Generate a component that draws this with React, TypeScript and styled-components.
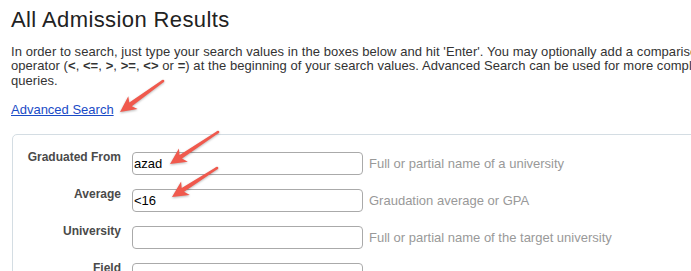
import React from "react";
import styled, { createGlobalStyle } from "styled-components";

const GlobalStyle = createGlobalStyle`
  html, body { margin: 0; padding: 0; background: #fff; overflow: hidden; }
  body { font-family: "Liberation Sans", Arial, Helvetica, sans-serif; }
`;

const Page = styled.div`
  position: relative;
  width: 691px;
  height: 271px;
  overflow: hidden;
  padding-left: 11px;
  box-sizing: border-box;
`;

const Title = styled.h1`
  margin: 7px 0 0;
  font-size: 22px;
  line-height: 26px;
  font-weight: normal;
  letter-spacing: 0.4px;
  color: #222;
  white-space: nowrap;
`;

const Intro = styled.p`
  margin: 12px 0 0;
  font-size: 13px;
  line-height: 1.1;
  letter-spacing: 0.06px;
  color: #333;
  white-space: nowrap;
  b { font-weight: bold; }
`;

const LinkLine = styled.p`
  margin: 15px 0 0;
  font-size: 13px;
  line-height: 1.1;
`;

const Link = styled.a`
  color: #1a4bc6;
  text-decoration: underline;
`;

const Panel = styled.div`
  margin: 17px 0 0 1px;
  width: 800px;
  height: 220px;
  border: 1px solid #d4dde3;
  border-radius: 5px;
  padding-top: 17px;
  box-sizing: border-box;
  display: flex;
  flex-direction: column;
  gap: 14px;
`;

const Row = styled.div`
  display: flex;
  align-items: flex-start;
  height: 23px;
`;

const Label = styled.label`
  width: 108px;
  margin: -2px 11px 0 0;
  text-align: right;
  font-size: 12px;
  line-height: 14px;
  font-weight: bold;
  color: #4a4a4a;
  white-space: nowrap;
`;

const Field = styled.input`
  width: 231px;
  height: 23px;
  box-sizing: border-box;
  border: 1px solid #aaa;
  border-radius: 4px;
  padding: 0 1px;
  font-family: "Liberation Sans", Arial, sans-serif;
  font-size: 13px;
  color: #000;
  background: #fff;
  outline: none;
`;

const Help = styled.span`
  margin-left: 6px;
  font-size: 13px;
  line-height: 23px;
  color: #999;
  white-space: nowrap;
`;

const Overlay = styled.svg`
  position: absolute;
  left: 0;
  top: 0;
  pointer-events: none;
  filter: drop-shadow(0 1px 1px rgba(0, 0, 0, 0.28));
`;

function arrowPoints(x1: number, y1: number, x2: number, y2: number) {
  const dx = x2 - x1;
  const dy = y2 - y1;
  const len = Math.hypot(dx, dy);
  const ux = dx / len;
  const uy = dy / len;
  const nx = -uy;
  const ny = ux;
  const headLen = 16;
  const headW = 8;
  const notch = 3;
  const tailW = 1.3;
  const neckW = 2.2;
  const bx = x2 - ux * headLen;
  const by = y2 - uy * headLen;
  const kx = x2 - ux * (headLen - notch);
  const ky = y2 - uy * (headLen - notch);
  const pts = [
    [x1 + nx * tailW, y1 + ny * tailW],
    [kx + nx * neckW, ky + ny * neckW],
    [bx + nx * headW, by + ny * headW],
    [x2, y2],
    [bx - nx * headW, by - ny * headW],
    [kx - nx * neckW, ky - ny * neckW],
    [x1 - nx * tailW, y1 - ny * tailW],
  ];
  return pts.map((p) => `${p[0].toFixed(1)},${p[1].toFixed(1)}`).join(" ");
}

const Arrow = ({ x1, y1, x2, y2 }: { x1: number; y1: number; x2: number; y2: number }) => (
  <g>
    <polygon points={arrowPoints(x1, y1, x2, y2)} fill="#f0594d" />
    <circle cx={x1} cy={y1} r={1.3} fill="#f0594d" />
  </g>
);

const rows = [
  { label: "Graduated From", value: "azad", help: "Full or partial name of a university" },
  { label: "Average", value: "<16", help: "Graudation average or GPA" },
  { label: "University", value: "", help: "Full or partial name of the target university" },
  { label: "Field", value: "", help: "" },
];

export default function App() {
  return (
    <>
      <GlobalStyle />
      <Page>
        <Title>All Admission Results</Title>
        <Intro>
          In order to search, just type your search values in the boxes below and hit 'Enter'. You may optionally add a comparison
          <br />
          operator (<b>&lt;</b>, <b>&lt;=</b>, <b>&gt;</b>, <b>&gt;=</b>, <b>&lt;&gt;</b> or <b>=</b>) at the beginning of your search values. Advanced Search can be used for more complex
          <br />
          queries.
        </Intro>
        <LinkLine>
          <Link href="#">Advanced Search</Link>
        </LinkLine>
        <Panel>
          {rows.map((r) => (
            <Row key={r.label}>
              <Label>{r.label}</Label>
              <Field defaultValue={r.value} />
              {r.help && <Help>{r.help}</Help>}
            </Row>
          ))}
        </Panel>
        <Overlay width={691} height={271} viewBox="0 0 691 271">
          <Arrow x1={163} y1={81} x2={120} y2={112} />
          <Arrow x1={218} y1={132} x2={170} y2={164} />
          <Arrow x1={217} y1={168} x2={172} y2={197} />
        </Overlay>
      </Page>
    </>
  );
}
